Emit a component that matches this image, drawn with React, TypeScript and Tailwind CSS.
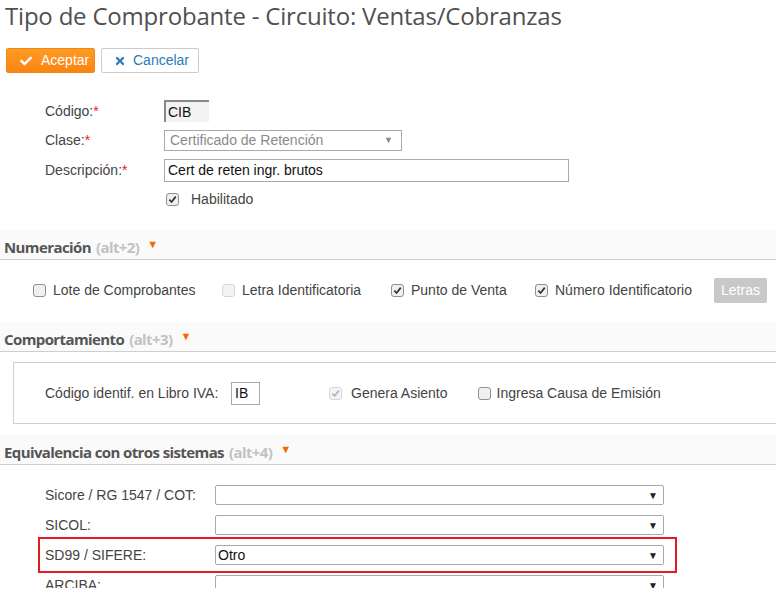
import { FaCheck, FaTimes } from "react-icons/fa";

function Box({ checked = false, disabled = false }: { checked?: boolean; disabled?: boolean }) {
  return (
    <span
      className={
        "inline-flex h-[13px] w-[13px] shrink-0 items-center justify-center rounded-[3px] border " +
        (disabled ? "border-[#d6d6d6] bg-[#f4f4f4]" : "border-[#8f8f8f] bg-[#f0f0f0]")
      }
    >
      {checked && (
        <svg viewBox="0 0 10 10" className="h-[9px] w-[9px]">
          <path
            d="M1.5 5.2 L4 7.8 L8.6 1.8"
            fill="none"
            stroke={disabled ? "#b5b5b5" : "#333"}
            strokeWidth="1.9"
          />
        </svg>
      )}
    </span>
  );
}

function Section({ title, keys }: { title: string; keys: string }) {
  return (
    <div className="flex h-[30px] items-end border-b border-[#cfcfcf] bg-[#fafafa] pb-[1px] pl-[4px] font-['Open_Sans',sans-serif] text-[15px] font-bold tracking-[-0.6px]">
      <span className="text-[#555]">{title}</span>
      <span className="ml-[5px] text-[#c2c2c2]">({keys})</span>
      <span className="mb-[9px] ml-[8px] text-[11px] leading-none text-[#f26a00]">▼</span>
    </div>
  );
}

function Select({ value = "" }: { value?: string }) {
  return (
    <div className="flex h-[20px] w-[449px] items-center justify-between rounded-[2px] border border-[#a9a9a9] bg-white pl-[2px] pr-[5px] text-[14px] text-[#111]">
      <span>{value}</span>
      <span className="text-[10px] text-[#222]">▼</span>
    </div>
  );
}

function EqRow({ label, value }: { label: string; value?: string }) {
  return (
    <div className="flex h-[30px] items-center">
      <span className="w-[215px] pl-[45px] text-[14px] text-[#444]">{label}</span>
      <Select value={value} />
    </div>
  );
}

function Check({ label, checked, disabled, width }: { label: string; checked?: boolean; disabled?: boolean; width: string }) {
  return (
    <div className={"flex items-center gap-[7px] " + width}>
      <Box checked={checked} disabled={disabled} />
      <span>{label}</span>
    </div>
  );
}

export default function App() {
  return (
    <div className="h-[603px] w-[776px] overflow-hidden bg-white font-['Liberation_Sans',Arial,sans-serif] text-[#444]">
      <div className="h-[588px] overflow-hidden">
        <h1 className="pl-[5px] pt-[1px] font-['Open_Sans',sans-serif] text-[24px] font-medium leading-[30px] tracking-[-0.2px] text-[#505050]">
          Tipo de Comprobante - Circuito: Ventas/Cobranzas
        </h1>

        <div className="mt-[17px] flex gap-[6px] pl-[6px]">
          <button className="flex h-[25px] w-[89px] items-center gap-[9px] rounded-[2px] border border-[#f08a12] bg-gradient-to-b from-[#ff9a26] to-[#fb8410] pl-[13px] text-[14px] text-white">
            <FaCheck className="h-[12px] w-[12px]" />
            Aceptar
          </button>
          <button className="flex h-[25px] w-[98px] items-center gap-[7px] rounded-[2px] border border-[#cccccc] bg-white pl-[12px] text-[14px] text-[#2c7cb8]">
            <FaTimes className="h-[12px] w-[12px]" />
            Cancelar
          </button>
        </div>

        <div className="mt-[27px] flex flex-col text-[14px]">
          <div className="flex h-[22px] items-center">
            <span className="w-[164px] pl-[45px]">
              Código:<span className="text-[#e2231a]">*</span>
            </span>
            <div className="flex h-[22px] w-[45px] items-center border-l-2 border-t-2 border-[#888] bg-[#f3f3f3] pl-[2px] text-[#111]">
              CIB
            </div>
          </div>
          <div className="mt-[8px] flex h-[21px] items-center">
            <span className="w-[164px] pl-[45px]">
              Clase:<span className="text-[#e2231a]">*</span>
            </span>
            <div className="flex h-[21px] w-[238px] items-center justify-between border border-[#a9a9a9] bg-white pl-[5px] pr-[8px] text-[#8a8a8a]">
              <span>Certificado de Retención</span>
              <span className="text-[9px] text-[#888]">▼</span>
            </div>
          </div>
          <div className="mt-[8px] flex h-[23px] items-center">
            <span className="w-[164px] pl-[45px]">
              Descripción:<span className="text-[#e2231a]">*</span>
            </span>
            <div className="flex h-[23px] w-[405px] items-center border border-[#a9a9a9] bg-white pl-[3px] text-[#111]">
              Cert de reten ingr. brutos
            </div>
          </div>
          <div className="mt-[8px] flex h-[19px] items-center gap-[6px] pl-[166px]">
            <Box checked />
            <span className="ml-[6px]">Habilitado</span>
          </div>
        </div>

        <div className="mt-[21px]">
          <Section title="Numeración" keys="alt+2" />
        </div>
        <div className="mt-[18px] flex h-[25px] items-center pl-[33px] text-[14px]">
          <Check label="Lote de Comprobantes" width="w-[189px]" />
          <Check label="Letra Identificatoria" disabled width="w-[169px]" />
          <Check label="Punto de Venta" checked width="w-[144px]" />
          <Check label="Número Identificatorio" checked width="w-[179px]" />
          <div className="flex h-[25px] w-[53px] items-center justify-center rounded-[2px] bg-[#c8c8c8] text-[14px] text-white">
            Letras
          </div>
        </div>

        <div className="mt-[19px]">
          <Section title="Comportamiento" keys="alt+3" />
        </div>
        <div className="ml-[13px] mt-[10px] flex h-[62px] items-center border border-r-0 border-[#cfcfcf] text-[14px]">
          <span className="w-[217px] pl-[31px]">Código identif. en Libro IVA:</span>
          <div className="flex h-[23px] w-[29px] items-center border border-[#a9a9a9] pl-[3px] text-[#111]">
            IB
          </div>
          <div className="ml-[69px] flex items-center gap-[9px]">
            <Box checked disabled />
            <span>Genera Asiento</span>
          </div>
          <div className="ml-[30px] flex items-center gap-[6px]">
            <Box />
            <span>Ingresa Causa de Emisión</span>
          </div>
        </div>

        <div className="mt-[11px]">
          <Section title="Equivalencia con otros sistemas" keys="alt+4" />
        </div>
        <div className="mt-[15px]">
          <EqRow label="Sicore / RG 1547 / COT:" />
          <EqRow label="SICOL:" />
          <div className="-mt-[3px] ml-[38px] w-[639px] border-2 border-[#e31b23]">
            <div className="flex h-[32px] items-center">
              <span className="w-[175px] pl-[5px] text-[14px] text-[#444]">SD99 / SIFERE:</span>
              <Select value="Otro" />
            </div>
          </div>
          <div className="-mt-[3px]">
            <EqRow label="ARCIBA:" />
          </div>
        </div>
      </div>
    </div>
  );
}
